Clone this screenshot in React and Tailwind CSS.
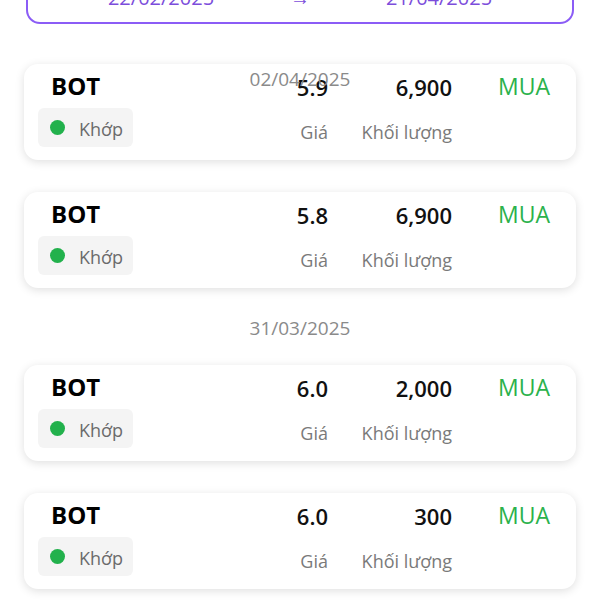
import React from "react";

const trades = [
  { price: "5.9", vol: "6,900" },
  { price: "5.8", vol: "6,900" },
  null,
  { price: "6.0", vol: "2,000" },
  { price: "6.0", vol: "300" },
];

function Card({ price, vol, className }) {
  return (
    <div
      className={
        "mx-[24px] h-[96px] rounded-[14px] bg-white shadow-[0_2px_10px_rgba(0,0,0,0.13)] pl-[14px] pr-[26px] pt-[6px] flex " +
        className
      }
    >
      <div className="flex-1 flex flex-col">
        <div className="ml-[13px] text-[24px] leading-[32px] font-bold text-black">BOT</div>
        <div className="mt-[6px] h-[39px] w-[95px] rounded-[6px] bg-[#f4f4f4] flex items-center pl-[12px]">
          <span className="w-[15px] h-[15px] rounded-full bg-[#22b14c]" />
          <span className="ml-[14px] mt-[3px] text-[18px] leading-[24px] text-[#6b6b6b]">Khớp</span>
        </div>
      </div>
      <div className="w-[100px] flex flex-col items-end">
        <div className="text-[22px] leading-[34px] font-semibold text-[#111]">{price}</div>
        <div className="mt-[16px] text-[18px] leading-[24px] text-[#7a7a7a]">Giá</div>
      </div>
      <div className="w-[124px] flex flex-col items-end">
        <div className="text-[22px] leading-[34px] font-semibold text-[#111]">{vol}</div>
        <div className="mt-[16px] text-[18px] leading-[24px] text-[#7a7a7a]">Khối lượng</div>
      </div>
      <div className="ml-[46px] text-[23px] leading-[32px] text-[#2bb24c]">MUA</div>
    </div>
  );
}

export default function App() {
  return (
    <div
      className="relative w-[600px] h-[600px] overflow-hidden bg-white flex flex-col"
      style={{ fontFamily: '"Open Sans", "Noto Sans", sans-serif' }}
    >
      <div className="-mt-[30px] mx-[26px] border-2 border-[#8b5cf6] rounded-[14px] pt-[12px] pb-[10px] grid grid-cols-[1fr_auto_1fr] text-[20px] leading-[28px] text-[#7c4ddb]">
        <div className="text-center pl-[4px]">22/02/2025</div>
        <div className="text-center">→</div>
        <div className="text-center pr-[4px]">21/04/2025</div>
      </div>
      <Card {...trades[0]} className="mt-[40px]" />
      <Card {...trades[1]} className="mt-[32px]" />
      <div className="mt-[27px] h-[26px] text-center text-[19px] leading-[26px] text-[#8a8a8a]">31/03/2025</div>
      <Card {...trades[3]} className="mt-[24px]" />
      <Card {...trades[4]} className="mt-[32px]" />
      <div className="absolute left-0 right-0 top-[66px] text-center text-[19px] leading-[26px] text-[#8a8a8a]">
        02/04/2025
      </div>
    </div>
  );
}
